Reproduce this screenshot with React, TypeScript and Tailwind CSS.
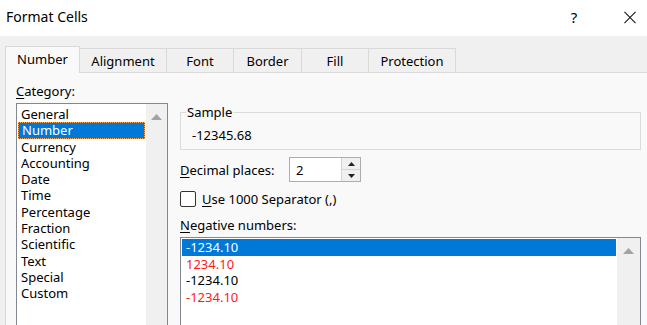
export default function App() {
  const categories = [
    "General",
    "Number",
    "Currency",
    "Accounting",
    "Date",
    "Time",
    "Percentage",
    "Fraction",
    "Scientific",
    "Text",
    "Special",
    "Custom",
  ];
  const tabs = [
    { label: "Alignment", w: "w-[87px]" },
    { label: "Font", w: "w-[67px]" },
    { label: "Border", w: "w-[68px]" },
    { label: "Fill", w: "w-[67px]" },
    { label: "Protection", w: "w-[87px]" },
  ];
  const negatives = [
    { text: "-1234.10", color: "text-white", selected: true },
    { text: "1234.10", color: "text-[#ff1a1a]" },
    { text: "-1234.10", color: "text-black" },
    { text: "-1234.10", color: "text-[#ff1a1a]" },
  ];

  return (
    <div
      className="w-[647px] h-[325px] overflow-hidden bg-[#f0f0f0] text-black text-[13px] leading-[16px]"
      style={{ fontFamily: '"Noto Sans", "Open Sans", sans-serif' }}
    >
      {/* title bar */}
      <div className="h-[36px] bg-white flex items-center pl-[6px]">
        <span className="text-[14px] leading-[20px] -mt-[2px]">Format Cells</span>
        <span className="ml-auto text-[15px] leading-[20px] -mt-[2px] w-[12px] text-center">?</span>
        <span className="ml-[44px] mr-[11px] w-[12px] flex justify-center -mt-[1px]">
          <svg width="13" height="13" viewBox="0 0 13 13">
            <path d="M0.5 0.5 L12.5 12.5 M12.5 0.5 L0.5 12.5" stroke="#111" strokeWidth="1.1" fill="none" />
          </svg>
        </span>
      </div>

      {/* tab strip */}
      <div className="relative z-10 flex items-end h-[37px] -mb-px pl-[5px]">
        <div className="w-[75px] h-[27px] bg-[#f9f9f9] border-x border-t border-[#d9d9d9] flex items-center justify-center pb-[2px]">
          Number
        </div>
        {tabs.map((t) => (
          <div
            key={t.label}
            className={`${t.w} h-[24px] mb-px bg-[#f0f0f0] border-t border-r border-[#d9d9d9] flex items-center justify-center`}
          >
            {t.label}
          </div>
        ))}
      </div>

      {/* panel */}
      <div className="ml-[5px] w-[660px] h-[260px] bg-[#f9f9f9] border border-[#d9d9d9] flex pl-[10px]">
        {/* category column */}
        <div className="w-[152px] pt-[10px] flex flex-col">
          <div>
            <span className="underline underline-offset-2">C</span>ategory:
          </div>
          <div className="mt-[4px] flex-1 bg-white border border-[#828790] flex">
            <div className="flex-1 pt-[2px]">
              {categories.map((c) =>
                c === "Number" ? (
                  <div
                    key={c}
                    className="mx-px h-[16.3px] bg-[#0078d7] text-white pl-[3px] border border-dotted border-[#ffae5c] leading-[14px]"
                  >
                    {c}
                  </div>
                ) : (
                  <div key={c} className="h-[16.3px] pl-[4px] leading-[16px]">
                    {c}
                  </div>
                )
              )}
            </div>
            <div className="w-[21px] bg-[#f0f0f0] flex justify-center pt-[10px]">
              <svg width="11" height="6" viewBox="0 0 11 6">
                <path d="M0 6 L5.5 0 L11 6 Z" fill="#a3a3a3" />
              </svg>
            </div>
          </div>
        </div>

        {/* right column */}
        <div className="ml-[12px] w-[461px] pt-[39px] flex flex-col">
          <div className="relative h-[38px] border border-[#dcdcdc] pl-[11px] pt-[14px]">
            <span className="absolute -top-[9px] left-[5px] px-px bg-[#f9f9f9]">Sample</span>
            -12345.68
          </div>

          <div className="mt-[7px] flex items-center">
            <div className="w-[109px]">
              <span className="underline underline-offset-2">D</span>ecimal places:
            </div>
            <div className="w-[72px] h-[25px] border border-[#adadad] bg-white flex">
              <div className="flex-1 pl-[6px] flex items-center">2</div>
              <div className="w-[19px] border-l border-[#d4d4d4] bg-[#f0f0f0] flex flex-col">
                <div className="flex-1 flex items-center justify-center border-b border-[#d4d4d4]">
                  <svg width="7" height="4" viewBox="0 0 7 4">
                    <path d="M0 4 L3.5 0 L7 4 Z" fill="#222" />
                  </svg>
                </div>
                <div className="flex-1 flex items-center justify-center">
                  <svg width="7" height="4" viewBox="0 0 7 4">
                    <path d="M0 0 L3.5 4 L7 0 Z" fill="#222" />
                  </svg>
                </div>
              </div>
            </div>
          </div>

          <div className="mt-[9px] flex items-center">
            <div className="w-[16px] h-[16px] border border-[#333] rounded-[2px] bg-white" />
            <div className="ml-[6px]">
              <span className="underline underline-offset-2">U</span>se 1000 Separator (,)
            </div>
          </div>

          <div className="mt-[10px]">
            <span className="underline underline-offset-2">N</span>egative numbers:
          </div>

          <div className="mt-[4px] flex-1 bg-white border border-[#828790] flex">
            <div className="flex-1 pt-px">
              {negatives.map((n, i) =>
                n.selected ? (
                  <div key={i} className="mx-px h-[16.5px] bg-[#0078d7] text-white pl-[4px] leading-[16px]">
                    {n.text}
                  </div>
                ) : (
                  <div key={i} className={`h-[16.5px] pl-[5px] leading-[16px] ${n.color}`}>
                    {n.text}
                  </div>
                )
              )}
            </div>
            <div className="w-[23px] bg-[#f0f0f0] flex justify-center pt-[10px]">
              <svg width="11" height="6" viewBox="0 0 11 6">
                <path d="M0 6 L5.5 0 L11 6 Z" fill="#a3a3a3" />
              </svg>
            </div>
          </div>
        </div>
      </div>
    </div>
  );
}
